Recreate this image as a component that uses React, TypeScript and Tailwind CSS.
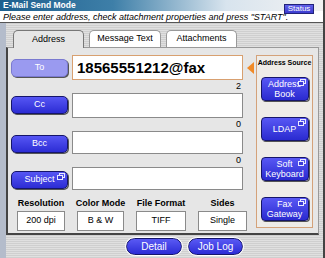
import React from "react";

const stripes =
  "bg-[repeating-linear-gradient(0deg,#cfcfcf_0px,#cfcfcf_1px,#e0e0e0_1px,#e0e0e0_2px)]";

const WinIcon: React.FC = () => (
  <svg width="8" height="7" viewBox="0 0 8 7" className="absolute right-[2px] top-[1px]">
    <rect x="2.5" y="0.5" width="5" height="4" fill="none" stroke="#e8e8ff" strokeWidth="1" />
    <rect x="0.5" y="2.5" width="5" height="4" fill="#3a3ad8" stroke="#e8e8ff" strokeWidth="1" />
  </svg>
);

type BtnProps = { label: string; light?: boolean; icon?: boolean };

const SideButton: React.FC<BtnProps> = ({ label, light, icon }) => (
  <div
    className={`relative w-[57px] h-[18px] rounded-[5px] border flex items-center justify-center text-[9px] text-white shadow-[1px_1px_0_#555] ${
      light
        ? "bg-[#9a9af0] border-[#7a7ad0]"
        : "bg-[linear-gradient(#5656f4,#2c2cd4)] border-[#15156a]"
    }`}
  >
    {label}
    {icon && <WinIcon />}
  </div>
);

const SourceButton: React.FC<{ lines: string[] }> = ({ lines }) => (
  <div className="relative w-[48px] h-[24px] rounded-[4px] border border-[#15156a] bg-[linear-gradient(#5858f4,#2a2ad0)] shadow-[1px_1px_0_#555] flex flex-col items-center justify-center text-[9px] leading-[10px] text-white whitespace-nowrap">
    {lines.map((l) => (
      <span key={l}>{l}</span>
    ))}
    <WinIcon />
  </div>
);

const Field: React.FC<{ h: string; active?: boolean; children?: React.ReactNode }> = ({
  h,
  active,
  children,
}) => (
  <div
    className={`w-[171px] ${h} bg-white border flex items-center pl-[4px] ${
      active ? "border-[#d8a070]" : "border-[#8a8a8a]"
    }`}
  >
    {children}
  </div>
);

const Counter: React.FC<{ n: string }> = ({ n }) => (
  <div className="w-[171px] h-[13px] text-right text-[9px] leading-[13px] pr-[2px]">{n}</div>
);

const Setting: React.FC<{ label: string; value: string; w: string }> = ({ label, value, w }) => (
  <div className={`flex flex-col items-center ${w}`}>
    <div className="text-[9px] font-bold leading-[11px] whitespace-nowrap">{label}</div>
    <div className="mt-[2px] w-full h-[20px] bg-white border border-[#8a8a8a] flex items-center justify-center text-[9px]">
      {value}
    </div>
  </div>
);

const Pill: React.FC<{ label: string; w: string }> = ({ label, w }) => (
  <div
    className={`${w} h-[17px] rounded-full bg-[linear-gradient(#5a5af4,#2c2cd6)] border border-[#15156a] outline outline-1 outline-white flex items-center justify-center text-[10px] text-white`}
  >
    {label}
  </div>
);

const App: React.FC = () => {
  return (
    <div
      className={`w-[325px] h-[258px] overflow-hidden flex flex-col border-r-2 border-[#444] ${stripes}`}
      style={{ fontFamily: '"Liberation Sans", Arial, sans-serif' }}
    >
      {/* title bar */}
      <div className="h-[11px] flex items-start bg-[linear-gradient(90deg,#1d5f8e_0%,#3e7fa8_35%,#d8e4ee_70%,#f2f2f2_100%)]">
        <div className="pl-[3px] text-[8.5px] leading-[11px] font-bold text-white">E-Mail Send Mode</div>
        <div className="ml-auto mr-[9px] mt-[4px] relative z-10 w-[30px] h-[10px] bg-[linear-gradient(#6060e8,#3c3cd0)] border border-[#22227a] text-white text-[8px] leading-[8px] flex items-center justify-center">
          Status
        </div>
      </div>
      {/* instruction */}
      <div className="h-[12px] bg-white border-b border-[#555] pl-[3px] text-[9px] leading-[13px] italic text-black whitespace-nowrap">
        Please enter address, check attachment properties and press "START".
      </div>

      <div className="flex flex-1">
        <div className="w-[6px] bg-[#b4bccb]" />
        <div className="flex-1 flex flex-col">
          {/* tabs */}
          <div className="flex items-end h-[24px] pl-[7px] gap-[5px]">
            <div className="w-[71px] h-[18px] rounded-t-[5px] border border-b-0 border-[#777] bg-[#e6e6e6] text-[9px] flex items-center justify-center -mb-[1px] relative z-10">
              Address
            </div>
            <div className="w-[72px] h-[17px] rounded-t-[5px] border border-b-0 border-[#999] bg-white text-[9px] flex items-center justify-center">
              Message Text
            </div>
            <div className="w-[71px] h-[17px] rounded-t-[5px] border border-b-0 border-[#999] bg-white text-[9px] flex items-center justify-center">
              Attachments
            </div>
          </div>
          {/* panel */}
          <div className="w-[313px] h-[188px] bg-[#e6e6e6] border-t border-r border-[#999] border-l-2 border-b-2 border-l-[#444] border-b-[#444] flex pt-[7px] pl-[3px]">
            <div className="flex flex-col">
              <div className="flex">
                <div className="flex flex-col w-[61px]">
                  <div className="h-[25px] flex items-center">
                    <SideButton label="To" light />
                  </div>
                  <div className="h-[38px] flex items-end pb-[4px]">
                    <SideButton label="Cc" />
                  </div>
                  <div className="h-[38px] flex items-end pb-[3px]">
                    <SideButton label="Bcc" />
                  </div>
                  <div className="h-[36px] flex items-end pb-[3px]">
                    <SideButton label="Subject" icon />
                  </div>
                </div>
                <div className="flex flex-col">
                  <Field h="h-[25px]" active>
                    <span className="text-[15px] font-bold leading-none">18565551212@fax</span>
                  </Field>
                  <Counter n="2" />
                  <Field h="h-[25px]" />
                  <Counter n="0" />
                  <Field h="h-[23px]" />
                  <Counter n="0" />
                  <Field h="h-[23px]" />
                </div>
                <div className="w-[14px] flex justify-center pt-[7px]">
                  <div className="w-0 h-0 border-y-[6px] border-y-transparent border-r-[7px] border-r-[#f08a28]" />
                </div>
              </div>
              <div className="flex mt-[6px] pl-[6px] gap-[12px]">
                <Setting label="Resolution" value="200 dpi" w="w-[48px]" />
                <Setting label="Color Mode" value="B & W" w="w-[47px]" />
                <Setting label="File Format" value="TIFF" w="w-[50px]" />
                <Setting label="Sides" value="Single" w="w-[49px]" />
              </div>
            </div>
            <div className="ml-[-1px] w-[57px] h-[173px] border border-[#d4a27a] bg-[#eeece8] flex flex-col items-center">
              <div className="text-[7px] font-bold leading-[10px] mt-[2px] whitespace-nowrap">
                Address Source
              </div>
              <div className="flex flex-col gap-[16px] mt-[9px]">
                <SourceButton lines={["Address", "Book"]} />
                <SourceButton lines={["LDAP"]} />
                <SourceButton lines={["Soft", "Keyboard"]} />
                <SourceButton lines={["Fax", "Gateway"]} />
              </div>
            </div>
          </div>
          {/* bottom */}
          <div className="flex pl-[120px] gap-[6px] mt-[3px]">
            <Pill label="Detail" w="w-[56px]" />
            <Pill label="Job Log" w="w-[55px]" />
          </div>
        </div>
      </div>
    </div>
  );
};

export default App;
